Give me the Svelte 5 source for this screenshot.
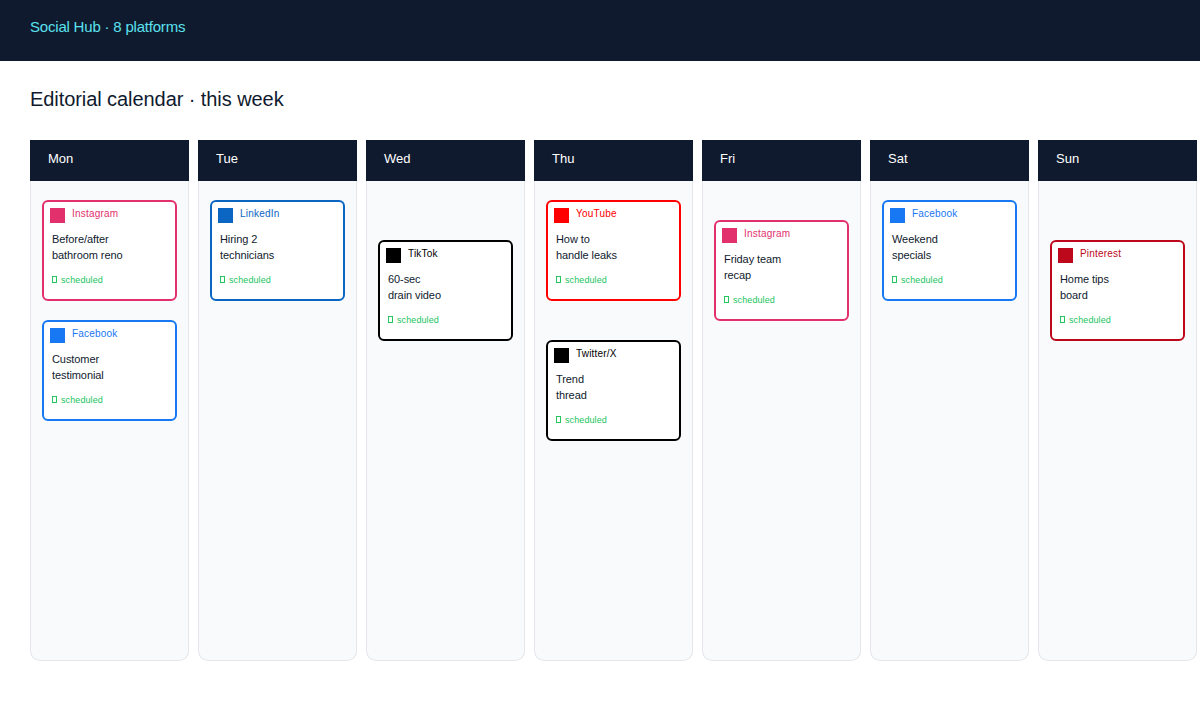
<script>
  const colors = {
    Instagram: '#e1306c',
    Facebook: '#1877f2',
    LinkedIn: '#0a66c2',
    TikTok: '#000000',
    YouTube: '#ff0000',
    'Twitter/X': '#000000',
    Pinterest: '#bd081c'
  };
  const days = [
    { name: 'Mon', posts: [
      { p: 'Instagram', a: 'Before/after', b: 'bathroom reno', gap: 19 },
      { p: 'Facebook', a: 'Customer', b: 'testimonial', gap: 19 }
    ] },
    { name: 'Tue', posts: [{ p: 'LinkedIn', a: 'Hiring 2', b: 'technicians', gap: 19 }] },
    { name: 'Wed', posts: [{ p: 'TikTok', a: '60-sec', b: 'drain video', gap: 59 }] },
    { name: 'Thu', posts: [
      { p: 'YouTube', a: 'How to', b: 'handle leaks', gap: 19 },
      { p: 'Twitter/X', a: 'Trend', b: 'thread', gap: 39 }
    ] },
    { name: 'Fri', posts: [{ p: 'Instagram', a: 'Friday team', b: 'recap', gap: 39 }] },
    { name: 'Sat', posts: [{ p: 'Facebook', a: 'Weekend', b: 'specials', gap: 19 }] },
    { name: 'Sun', posts: [{ p: 'Pinterest', a: 'Home tips', b: 'board', gap: 59 }] }
  ];
</script>

<div class="page">
  <header class="top">Social Hub · 8 platforms</header>
  <h1>Editorial calendar · this week</h1>
  <div class="week">
    {#each days as day}
      <section class="col">
        <div class="head">{day.name}</div>
        <div class="body">
          {#each day.posts as post}
            <article class="card" style="border-color: {colors[post.p]}; margin-top: {post.gap}px">
              <div class="meta">
                <span class="sq" style="background: {colors[post.p]}"></span>
                <span class="plat" style="color: {colors[post.p]}">{post.p}</span>
              </div>
              <p class="text">{post.a}<br />{post.b}</p>
              <div class="status"><span class="box"></span>scheduled</div>
            </article>
          {/each}
        </div>
      </section>
    {/each}
  </div>
</div>

<style>
  :global(body) {
    margin: 0;
    background: #fff;
    font-family: "Liberation Sans", Arial, sans-serif;
  }
  .page {
    width: 1200px;
    height: 720px;
    overflow: hidden;
  }
  .top {
    height: 61px;
    box-sizing: border-box;
    padding: 18px 30px 0;
    background: #0f1a2e;
    color: #5ce1ee;
    font-size: 15px;
    line-height: 18px;
    letter-spacing: -0.2px;
  }
  h1 {
    margin: 0;
    padding: 26px 30px 0;
    height: 79px;
    box-sizing: border-box;
    font-size: 20px;
    line-height: 24px;
    font-weight: 400;
    letter-spacing: -0.07px;
    color: #0f1a2e;
  }
  .week {
    display: flex;
    gap: 9px;
    padding-left: 30px;
  }
  .col {
    flex: none;
    width: 159px;
    height: 521px;
    display: flex;
    flex-direction: column;
  }
  .head {
    height: 41px;
    box-sizing: border-box;
    padding: 11px 18px 0;
    background: #0f1a2e;
    color: #fff;
    font-size: 13px;
    line-height: 16px;
  }
  .body {
    flex: 1;
    box-sizing: border-box;
    padding: 0 11px;
    background: #f9fafb;
    border: 1px solid #e5e7eb;
    border-top: 0;
    border-radius: 0 0 10px 10px;
  }
  .card {
    box-sizing: border-box;
    width: 135px;
    height: 101px;
    background: #fff;
    border: 2px solid;
    border-radius: 6px;
    padding: 6px 8px 0 6px;
  }
  .meta {
    display: flex;
    align-items: flex-start;
    gap: 7px;
    height: 15px;
  }
  .sq {
    flex: none;
    width: 15px;
    height: 15px;
  }
  .plat {
    font-size: 10px;
    line-height: 12px;
    letter-spacing: 0.2px;
  }
  .text {
    margin: 8px 0 0 2px;
    font-size: 11px;
    line-height: 16px;
    letter-spacing: -0.08px;
    color: #0f1a2e;
  }
  .status {
    display: flex;
    align-items: flex-start;
    gap: 4px;
    margin: 11px 0 0 2px;
    font-size: 9px;
    line-height: 12px;
    letter-spacing: 0.1px;
    color: #22c55e;
  }
  .box {
    box-sizing: border-box;
    width: 5px;
    height: 7px;
    margin-top: 2px;
    border: 1px solid #22c55e;
  }
</style>
